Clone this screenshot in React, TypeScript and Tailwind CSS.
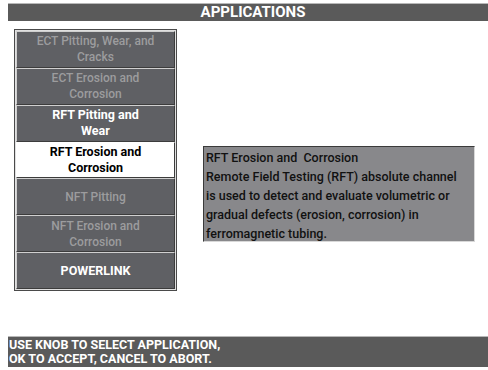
const items = [
  { label: ['ECT Pitting, Wear, and', 'Cracks'], state: 'off' },
  { label: ['ECT Erosion and', 'Corrosion'], state: 'off' },
  { label: ['RFT Pitting and', 'Wear'], state: 'on' },
  { label: ['RFT Erosion and', 'Corrosion'], state: 'sel' },
  { label: ['NFT Pitting'], state: 'off' },
  { label: ['NFT Erosion and', 'Corrosion'], state: 'off' },
  { label: ['POWERLINK'], state: 'on' },
];

export default function App() {
  return (
    <div className="w-[488px] h-[370px] bg-white relative overflow-hidden font-['Roboto',sans-serif]">
      {/* Title bar */}
      <div className="ml-[8px] mt-[3px] h-[18px] bg-[#5a5a5a] border-t border-[#b8b8b8] flex items-center justify-center pl-[10px]">
        <span className="text-white font-bold text-[15px] leading-none">APPLICATIONS</span>
      </div>

      <div className="flex mt-[8px]">
        {/* Application list */}
        <div className="ml-[14px] w-[163px] h-[262px] border border-[#4a4a4a] bg-[#e0e0e0] p-px flex flex-col">
          {items.map((it, i) => (
            <div
              key={i}
              className={`h-[37px] flex flex-col items-center justify-center leading-[16px] border-t border-l border-b border-r ${
                it.state === 'sel'
                  ? 'bg-white text-black font-bold text-[12.5px] border-t-white border-l-white border-b-[#3c3c3c] border-r-[#3c3c3c]'
                  : it.state === 'on'
                  ? 'bg-[#5f6064] text-white font-bold text-[12.5px] border-t-[#d0d0d0] border-l-[#d0d0d0] border-b-[#3c3c3c] border-r-[#3c3c3c]'
                  : 'bg-[#5f6064] text-[#9c9c9e] font-medium text-[12px] border-t-[#d0d0d0] border-l-[#d0d0d0] border-b-[#3c3c3c] border-r-[#3c3c3c]'
              }`}
            >
              {it.label.map((l) => (
                <span key={l}>{l}</span>
              ))}
            </div>
          ))}
        </div>

        {/* Description */}
        <div className="ml-[26px] mt-[117px] w-[272px] h-[96px] bg-[#88888b] border-t border-l border-[#3a3a3a] border-r border-r-[#d8d8d8] border-b border-b-[#d8d8d8] pl-[2px] pt-[1px] text-[12.5px] leading-[19px] text-[#111] font-medium">
          <div>RFT Erosion and&nbsp; Corrosion</div>
          <div>Remote Field Testing (RFT) absolute channel</div>
          <div>is used to detect and evaluate volumetric or</div>
          <div>gradual defects (erosion, corrosion) in</div>
          <div>ferromagnetic tubing.</div>
        </div>
      </div>

      {/* Status bar */}
      <div className="absolute left-[8px] right-0 top-[336px] h-[31px] bg-[#5a5a5a] border-t border-[#b8b8b8] pl-[1px] pt-[1px] text-white font-bold text-[12.5px] leading-[14px]">
        <div>USE KNOB TO SELECT APPLICATION,</div>
        <div>OK TO ACCEPT, CANCEL TO ABORT.</div>
      </div>
    </div>
  );
}
